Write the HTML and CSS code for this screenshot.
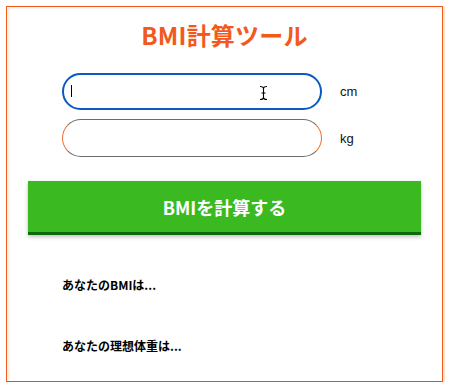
FILE: index.html
```html
<!DOCTYPE html>
<html lang="ja">
<head>
<meta charset="utf-8">
<title>BMI計算ツール</title>
<link rel="stylesheet" href="styles.css">
</head>
<body>
<div class="tool">
  <h1 class="title">BMI計算ツール</h1>
  <div class="fields">
    <div class="row">
      <div class="field field-focus"><span class="caret"></span>
        <svg class="ibeam" width="9" height="16" viewBox="0 0 9 16"><path d="M1 1.5 C3 1.5 4.5 2 4.5 3.5 V12.5 C4.5 14 3 14.5 1 14.5 M8 1.5 C6 1.5 4.5 2 4.5 3.5 M4.5 12.5 C4.5 14 6 14.5 8 14.5 M2.5 8 H6.5" fill="none" stroke="#000" stroke-width="1.1"/></svg>
      </div>
      <span class="unit">cm</span>
    </div>
    <div class="row">
      <div class="field field-idle"></div>
      <span class="unit">kg</span>
    </div>
  </div>
  <button class="calc">BMIを計算する</button>
  <p class="result result-first">あなたのBMIは...</p>
  <p class="result result-second">あなたの理想体重は...</p>
</div>
</body>
</html>
```
FILE: styles.css
```css
html, body {
  margin: 0;
  padding: 0;
  background: #fff;
}
body {
  font-family: "Noto Sans CJK JP", "Noto Sans", sans-serif;
  color: #000;
}
.tool {
  margin: 6px 0 0 6px;
  width: 435px;
  height: 374px;
  border: 1px solid #f05a1c;
  border-bottom-color: #777;
  box-shadow: inset 2px 1px 2px rgba(255, 190, 120, 0.25), 2px 0 1px rgba(255, 200, 140, 0.45);
  display: flex;
  flex-direction: column;
  align-items: stretch;
}
.title {
  margin: 13px 0 0;
  text-align: center;
  font-size: 24px;
  line-height: 30px;
  font-weight: 700;
  color: #f2591d;
  letter-spacing: 0.2px;
}
.fields {
  margin: 23px 0 0 55px;
  display: flex;
  flex-direction: column;
  gap: 9px;
}
.row {
  display: flex;
  align-items: center;
  gap: 18px;
}
.field {
  position: relative;
  box-sizing: border-box;
  width: 260px;
  height: 38px;
  border-radius: 19px;
  background: #fff;
}
.field-focus {
  height: 37px;
  border: 2px solid #0a5ac2;
}
.field-idle {
  border: 1px solid #6b6b6b;
  border-left-color: #f0692f;
  border-right-color: #f0692f;
}
.caret {
  position: absolute;
  left: 7px;
  top: 10px;
  width: 1px;
  height: 12px;
  background: #000;
}
.ibeam {
  position: absolute;
  left: 195px;
  top: 10px;
}
.unit {
  font-family: "Liberation Sans", "Noto Sans", sans-serif;
  font-size: 13px;
  color: #111;
}
.calc {
  margin: 24px 21px 0;
  height: 54px;
  border: none;
  border-bottom: 3px solid #0d6a0c;
  background: #3bb921;
  color: #fff;
  font-family: "Noto Sans CJK JP", sans-serif;
  font-size: 18px;
  font-weight: 700;
  box-shadow: 0 2px 4px rgba(0, 0, 0, 0.25);
  padding: 0;
}
.result {
  margin: 40px 0 0 55px;
  font-size: 12px;
  line-height: 20px;
  font-weight: 700;
}
.result-second {
  margin-top: 41px;
}
```
